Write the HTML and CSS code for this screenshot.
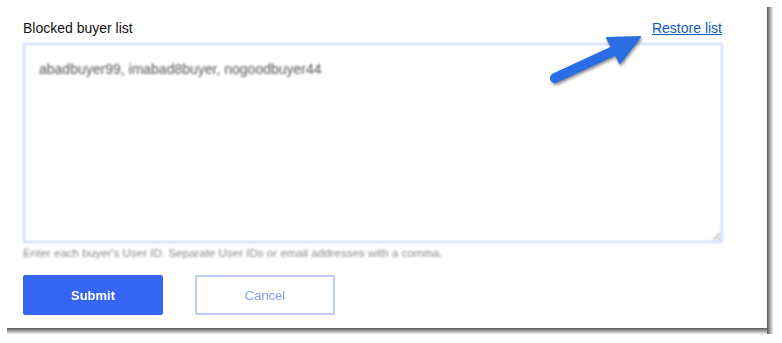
FILE: index.html
```html
<!DOCTYPE html>
<html>
<head>
<meta charset="utf-8">
<link rel="stylesheet" href="styles.css">
</head>
<body>
<div class="page">
<div class="card">
  <div class="header">
    <span class="label">Blocked buyer list</span>
    <a class="restore" href="#">Restore list</a>
  </div>
  <textarea class="list">abadbuyer99, imabad8buyer, nogoodbuyer44</textarea>
  <p class="hint">Enter each buyer's User ID. Separate User IDs or email addresses with a comma.</p>
  <div class="actions">
    <button class="btn primary">Submit</button>
    <button class="btn secondary">Cancel</button>
  </div>
  <svg class="arrow" width="110" height="70" viewBox="0 0 110 70">
    <line x1="15" y1="58" x2="80" y2="28" stroke="#2b6ee3" stroke-width="10" stroke-linecap="round"/>
    <polygon points="67,18 100,17 80,43" fill="#2b6ee3" stroke="#2b6ee3" stroke-width="2" stroke-linejoin="round"/>
  </svg>
</div>
</div>
</body>
</html>
```
FILE: styles.css
```css
html, body {
  margin: 0;
  padding: 0;
  background: #ffffff;
}
body {
  font-family: "Liberation Sans", Arial, sans-serif;
}
.page {
  height: 343px;
  box-sizing: border-box;
  padding-bottom: 15px;
  overflow: hidden;
}
.card {
  position: relative;
  width: 767px;
  box-sizing: border-box;
  padding: 20px 44px 13px 23px;
  background: #ffffff;
  display: flex;
  flex-direction: column;
  align-items: flex-start;
}
.card::before {
  content: "";
  position: absolute;
  left: 100%;
  top: 7px;
  bottom: -6px;
  width: 7px;
  background: linear-gradient(to right, rgba(0, 0, 0, 0.66), rgba(0, 0, 0, 0.35) 45%, rgba(0, 0, 0, 0.1) 80%, rgba(0, 0, 0, 0));
}
.card::after {
  content: "";
  position: absolute;
  top: 100%;
  left: 7px;
  right: 0;
  height: 7px;
  background: linear-gradient(to bottom, rgba(0, 0, 0, 0.66), rgba(0, 0, 0, 0.35) 45%, rgba(0, 0, 0, 0.1) 80%, rgba(0, 0, 0, 0));
}
.header {
  display: flex;
  justify-content: space-between;
  align-items: center;
  align-self: stretch;
  height: 17px;
  margin-bottom: 6px;
  font-size: 14px;
  line-height: 17px;
}
.label {
  color: #111111;
}
.restore {
  color: #0b5bc2;
  text-decoration: underline;
  margin-right: 1px;
}
.list {
  display: block;
  width: 700px;
  height: 200px;
  box-sizing: border-box;
  margin: 0;
  border: 2px solid #cdd6ff;
  padding: 16px 14px;
  font-family: "Liberation Sans", Arial, sans-serif;
  font-size: 14px;
  color: #555555;
  background: #ffffff;
  resize: vertical;
  outline: none;
  filter: blur(0.9px);
}
.hint {
  margin: 3px 0 0;
  font-size: 11.6px;
  line-height: 13px;
  color: #888888;
  filter: blur(0.9px);
}
.actions {
  display: flex;
  gap: 32px;
  margin-top: 16px;
  filter: blur(0.7px);
}
.btn {
  width: 140px;
  height: 40px;
  box-sizing: border-box;
  font-family: "Liberation Sans", Arial, sans-serif;
  font-size: 13px;
  border-radius: 2px;
}
.primary {
  background: #3665f3;
  border: none;
  color: #ffffff;
  font-weight: bold;
}
.secondary {
  background: #ffffff;
  border: 2px solid #bfcbfd;
  color: #85a0f6;
}
.arrow {
  position: absolute;
  left: 540px;
  top: 20px;
  filter: drop-shadow(1px 2px 1.5px rgba(0, 0, 0, 0.45));
}
```
